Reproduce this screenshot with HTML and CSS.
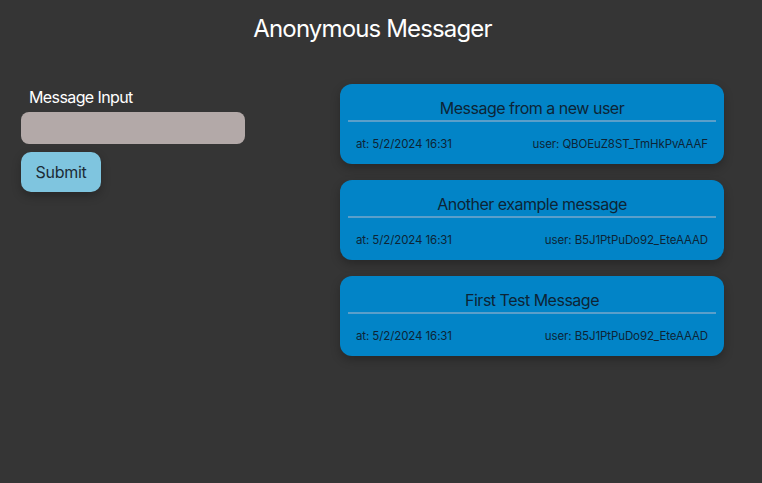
FILE: index.html
```html
<!DOCTYPE html>
<html>
<head>
<meta charset="utf-8">
<link rel="stylesheet" href="styles.css">
</head>
<body>
<div class="page">
  <h1 class="title">Anonymous Messager</h1>
  <div class="main">
    <div class="form">
      <label class="label">Message Input</label>
      <input class="input" type="text">
      <button class="submit">Submit</button>
    </div>
    <div class="messages">
      <div class="card">
        <div class="card-title">Message from a new user</div>
        <div class="card-meta"><span>at: 5/2/2024 16:31</span><span>user: QBOEuZ8ST_TmHkPvAAAF</span></div>
      </div>
      <div class="card">
        <div class="card-title">Another example message</div>
        <div class="card-meta"><span>at: 5/2/2024 16:31</span><span>user: B5J1PtPuDo92_EteAAAD</span></div>
      </div>
      <div class="card">
        <div class="card-title">First Test Message</div>
        <div class="card-meta"><span>at: 5/2/2024 16:31</span><span>user: B5J1PtPuDo92_EteAAAD</span></div>
      </div>
    </div>
  </div>
</div>
</body>
</html>
```
FILE: styles.css
```css
html, body {
  margin: 0;
  padding: 0;
  background: #353535;
  font-family: Inter, "Liberation Sans", sans-serif;
  height: 100%;
}
.page {
  width: 703px;
  margin-left: 21px;
  padding-top: 14px;
}
.title {
  margin: 0;
  text-align: center;
  font-size: 24px;
  font-weight: 400;
  line-height: 30px;
  color: #ffffff;
  letter-spacing: -0.85px;
}
.main {
  display: flex;
  justify-content: space-between;
  align-items: flex-start;
  margin-top: 40px;
}
.form {
  width: 224px;
  display: flex;
  flex-direction: column;
  align-items: flex-start;
  padding-top: 3px;
}
.label {
  color: #ffffff;
  font-size: 16px;
  line-height: 20px;
  padding-left: 8px;
  margin-bottom: 5px;
  letter-spacing: -0.6px;
}
.input {
  box-sizing: border-box;
  width: 224px;
  height: 32px;
  border: none;
  border-radius: 8px;
  background: #b3a9a8;
  outline: none;
  margin: 0;
}
.submit {
  margin-top: 8px;
  width: 80px;
  height: 40px;
  border: none;
  border-radius: 10px;
  background: #7fc5df;
  color: #1c2c36;
  font-family: Inter, "Liberation Sans", sans-serif;
  font-size: 16px;
  letter-spacing: -0.3px;
  box-shadow: 0 4px 10px rgba(0,0,0,0.25);
  padding: 0;
}
.messages {
  width: 384px;
  display: flex;
  flex-direction: column;
  gap: 16px;
}
.card {
  background: #0284c7;
  border-radius: 12px;
  padding: 8px;
  box-shadow: 0 4px 10px rgba(0,0,0,0.25);
  color: #0d2436;
}
.card-title {
  text-align: center;
  font-size: 16px;
  line-height: 24px;
  padding: 4px 0 0;
  border-bottom: 2px solid #5a9fca;
  letter-spacing: -0.5px;
}
.card-meta {
  display: flex;
  justify-content: space-between;
  font-size: 11.5px;
  line-height: 18px;
  padding: 13px 8px 3px;
  letter-spacing: -0.1px;
}
```
